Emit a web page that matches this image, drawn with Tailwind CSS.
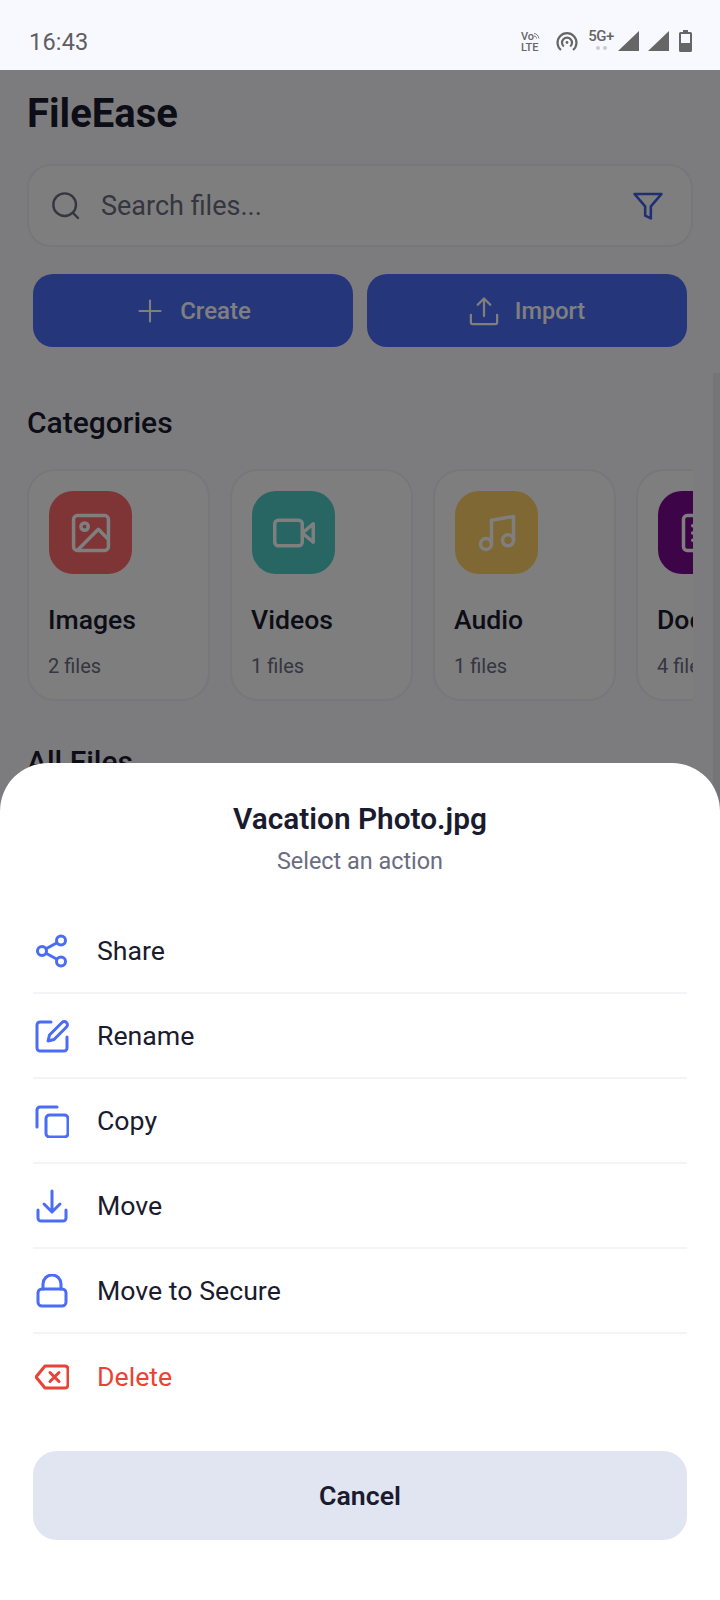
<!DOCTYPE html>
<html>
<head>
<meta charset="utf-8">
<script src="https://cdn.jsdelivr.net/npm/@tailwindcss/browser@4"></script>
</head>
<body class="m-0">
<div class="relative w-[720px] h-[1600px] overflow-hidden bg-[#f8f9ff] font-['Roboto',sans-serif] text-[#1a1b2e]">
  <!-- status bar -->
  <div class="h-[70px] flex items-center justify-between pl-[29px] pr-[28px] pt-[14px] text-[#5f5f62]">
    <span class="text-[23.500px] leading-none tracking-[0.2px] pt-[2px]">16:43</span>
    <div class="flex items-center">
      <div class="w-[19px] mr-[16px] text-[11px] leading-[11px] font-medium flex flex-col text-[#666]">
        <span class="flex items-center">Vo<svg width="7" height="9" viewBox="0 0 7 9" fill="none" stroke="#666" stroke-width="1"><path d="M0 1c3 0 5 2 6 6M0 4c2 0 3 1 3 3"/></svg></span>
        <span>LTE</span>
      </div>
      <svg class="mr-[10px]" width="22" height="22" viewBox="0 0 22 22" fill="none" stroke="#666" stroke-width="2.200"><path d="M5 19a9.500 9.500 0 1 1 12 0"/><path d="M7.800 15.500a5 5 0 1 1 6.400 0"/><circle cx="11" cy="11.500" r="1.400" fill="#666" stroke="none"/></svg>
      <div class="w-[28px] mr-[3px] flex flex-col items-center -mt-[6px] -ml-[1px]">
        <span class="text-[15px] leading-[16px] font-medium tracking-[-0.5px] text-[#666]">5G+</span>
        <span class="flex gap-[3px] mt-[2px]"><i class="block w-[4px] h-[4px] rounded-full bg-[#ccc]"></i><i class="block w-[4px] h-[4px] rounded-full bg-[#ccc]"></i></span>
      </div>
      <svg class="mr-[8px] -mt-[2px]" width="22" height="22" viewBox="0 0 22 22"><path d="M21 1v20H0z" fill="#666"/></svg>
      <svg class="mr-[9px] -mt-[2px]" width="22" height="22" viewBox="0 0 22 22"><path d="M21 1v20H0z" fill="#666"/></svg>
      <svg class="-mt-[2px]" width="13" height="22" viewBox="0 0 13 22"><path fill-rule="evenodd" d="M4 0h5v2h2.500A1.500 1.500 0 0 1 13 3.500V20.500A1.500 1.500 0 0 1 11.500 22h-10A1.500 1.500 0 0 1 0 20.500V3.500A1.500 1.500 0 0 1 1.500 2H4zM2 4v9h9V4z" fill="#666"/></svg>
    </div>
  </div>

  <!-- page -->
  <div class="px-[27px]">
    <h1 class="mt-[23px] text-[40px] leading-[42px] font-bold text-[#1a1b2e]">FileEase</h1>
    <div class="mt-[29px] h-[83px] rounded-[24px] border-2 border-[#eceef5] bg-[#fcfcff] flex items-center pl-[21px] pr-[26px]">
      <svg width="32" height="32" viewBox="0 0 24 24" fill="none" stroke="#6b6c80" stroke-width="1.800" stroke-linecap="round"><circle cx="11" cy="11" r="8.500"/><path d="m21 21-3.800-3.800"/></svg>
      <span class="ml-[19px] pt-[2px] text-[27px] leading-none text-[#6b6c80] flex-1">Search files...</span>
      <svg width="34" height="34" viewBox="0 0 24 24" fill="none" stroke="#3f5fe0" stroke-width="1.800" stroke-linejoin="round"><path d="M2.500 3.500h19l-7.500 8.800v8.500l-4-2v-6.500z"/></svg>
    </div>
    <div class="mt-[27px] mx-[6px] grid grid-cols-2 gap-[14px]">
      <div class="h-[73px] rounded-[20px] bg-[#4a6cf7] flex items-center justify-center gap-[18px] pl-[3px] text-white">
        <svg width="24" height="24" viewBox="0 0 24 24" fill="none" stroke="#fff" stroke-width="2.100" stroke-linecap="round"><path d="M12 1.500v21M1.500 12h21"/></svg>
        <span class="text-[24px] font-medium leading-none pt-[1px]">Create</span>
      </div>
      <div class="h-[73px] rounded-[20px] bg-[#4a6cf7] flex items-center justify-center gap-[16px] text-white">
        <svg width="30" height="30" viewBox="0 0 24 24" fill="none" stroke="#fff" stroke-width="1.800" stroke-linecap="round" stroke-linejoin="round"><path d="M12 16V2M7 7l5-5 5 5M1.500 15v6a1.500 1.500 0 0 0 1.500 1.500h18a1.500 1.500 0 0 0 1.500-1.500v-6"/></svg>
        <span class="text-[23.500px] font-medium leading-none pt-[3px]">Import</span>
      </div>
    </div>
    <h2 class="mt-[60px] text-[30px] leading-[32px] font-medium">Categories</h2>
    <div class="mt-[30px] w-[666px] overflow-hidden">
      <div class="flex gap-[20px] w-[900px]">
        <div class="w-[183px] h-[232px] shrink-0 rounded-[28px] border-2 border-[#eceef5] bg-[#fcfcff] pl-[20px] pt-[20px]">
          <div class="w-[83px] h-[83px] rounded-[24px] bg-[#ff6b6b] flex items-center justify-center">
            <svg width="44" height="44" viewBox="0 0 24 24" fill="none" stroke="#fff" stroke-width="1.900" stroke-linecap="round" stroke-linejoin="round"><rect x="2.500" y="2.500" width="19" height="19" rx="2"/><circle cx="8.500" cy="8.500" r="2"/><path d="M21 15l-5-5L5 21"/></svg>
          </div>
          <div class="mt-[30px] -ml-[1px] text-[26.600px] leading-[32px] font-medium">Images</div>
          <div class="mt-[18px] -ml-[1px] text-[20px] leading-[24px] text-[#6b6c80]">2 files</div>
        </div>
        <div class="w-[183px] h-[232px] shrink-0 rounded-[28px] border-2 border-[#eceef5] bg-[#fcfcff] pl-[20px] pt-[20px]">
          <div class="w-[83px] h-[83px] rounded-[24px] bg-[#4ecdc4] flex items-center justify-center">
            <svg width="44" height="44" viewBox="0 0 24 24" fill="none" stroke="#fff" stroke-width="1.900" stroke-linecap="round" stroke-linejoin="round"><rect x="1.500" y="5" width="15" height="14" rx="2"/><path d="M22.500 7l-6 5 6 5z"/></svg>
          </div>
          <div class="mt-[30px] -ml-[1px] text-[26.600px] leading-[32px] font-medium">Videos</div>
          <div class="mt-[18px] -ml-[1px] text-[20px] leading-[24px] text-[#6b6c80]">1 files</div>
        </div>
        <div class="w-[183px] h-[232px] shrink-0 rounded-[28px] border-2 border-[#eceef5] bg-[#fcfcff] pl-[20px] pt-[20px]">
          <div class="w-[83px] h-[83px] rounded-[24px] bg-[#ffd166] flex items-center justify-center">
            <svg width="44" height="44" viewBox="0 0 24 24" fill="none" stroke="#fff" stroke-width="1.900" stroke-linecap="round" stroke-linejoin="round"><path d="M9 18V5l12-2v13"/><circle cx="6" cy="18" r="3"/><circle cx="18" cy="16" r="3"/></svg>
          </div>
          <div class="mt-[30px] -ml-[1px] text-[26.600px] leading-[32px] font-medium">Audio</div>
          <div class="mt-[18px] -ml-[1px] text-[20px] leading-[24px] text-[#6b6c80]">1 files</div>
        </div>
        <div class="w-[183px] h-[232px] shrink-0 rounded-[28px] border-2 border-[#eceef5] bg-[#fcfcff] pl-[20px] pt-[20px]">
          <div class="w-[83px] h-[83px] rounded-[24px] bg-[#7b0a8f] flex items-center justify-center">
            <svg width="44" height="44" viewBox="0 0 24 24" fill="none" stroke="#fff" stroke-width="1.900" stroke-linecap="round" stroke-linejoin="round"><rect x="3" y="2.500" width="18" height="19" rx="2"/><path d="M8 8h8M8 12h8M8 16h8"/></svg>
          </div>
          <div class="mt-[30px] -ml-[1px] text-[26.600px] leading-[32px] font-medium">Docs</div>
          <div class="mt-[18px] -ml-[1px] text-[20px] leading-[24px] text-[#6b6c80]">4 files</div>
        </div>
      </div>
    </div>
    <h2 class="mt-[45px] text-[30px] leading-[32px] font-medium">All Files</h2>
  </div>

  <!-- scrim and sheet -->
  <div class="absolute left-0 right-0 top-[70px] bottom-0 bg-black/50"></div>
  <div class="absolute right-0 top-[373px] w-[7px] h-[460px] bg-[#757578]"></div>

  <div class="absolute left-0 right-0 top-[763px] bottom-0 rounded-t-[48px] bg-white px-[33px]">
    <div class="mt-[38px] text-center text-[29.800px] leading-[36px] font-semibold text-[#1a1b2e]">Vacation Photo.jpg</div>
    <div class="mt-[10px] text-center text-[23.400px] leading-[28px] text-[#6b6c80]">Select an action</div>

    <div class="mt-[34px]">
      <div class="h-[85px] flex items-center border-b-2 border-[#f3f4f8] pl-[2px] gap-[28px]">
        <svg width="34" height="34" viewBox="0 0 34 34" fill="none" stroke="#4a6cf7" stroke-width="3"><circle cx="26" cy="6.500" r="4.500"/><circle cx="7" cy="17" r="4.500"/><circle cx="26" cy="27.500" r="4.500"/><path d="M11 14.800l11-6M11 19.200l11 6"/></svg>
        <span class="text-[26.700px] leading-none pt-[2px]">Share</span>
      </div>
      <div class="h-[85px] flex items-center border-b-2 border-[#f3f4f8] pl-[2px] gap-[28px]">
        <svg width="34" height="34" viewBox="0 0 34 34" fill="none" stroke="#4a6cf7" stroke-width="3" stroke-linecap="round" stroke-linejoin="round"><path d="M16 3H5a3 3 0 0 0-3 3v23a3 3 0 0 0 3 3h24a3 3 0 0 0 3-3V18"/><path d="M13 22l1.500-6L27 3.500a3 3 0 0 1 4.500 4.500L19 20.500z"/></svg>
        <span class="text-[26.700px] leading-none pt-[2px]">Rename</span>
      </div>
      <div class="h-[85px] flex items-center border-b-2 border-[#f3f4f8] pl-[2px] gap-[28px]">
        <svg width="34" height="34" viewBox="0 0 34 34" fill="none" stroke="#4a6cf7" stroke-width="3" stroke-linecap="round" stroke-linejoin="round"><rect x="11" y="11" width="22" height="22" rx="3.500"/><path d="M22 3H5a3 3 0 0 0-3 3v17"/></svg>
        <span class="text-[26.700px] leading-none pt-[2px]">Copy</span>
      </div>
      <div class="h-[85px] flex items-center border-b-2 border-[#f3f4f8] pl-[2px] gap-[28px]">
        <svg width="34" height="34" viewBox="0 0 34 34" fill="none" stroke="#4a6cf7" stroke-width="3" stroke-linecap="round" stroke-linejoin="round"><path d="M17 2v21M9 15l8 8 8-8M3 21v8a3 3 0 0 0 3 3h22a3 3 0 0 0 3-3v-8"/></svg>
        <span class="text-[26.700px] leading-none pt-[2px]">Move</span>
      </div>
      <div class="h-[85px] flex items-center border-b-2 border-[#f3f4f8] pl-[2px] gap-[28px]">
        <svg width="34" height="34" viewBox="0 0 34 34" fill="none" stroke="#4a6cf7" stroke-width="3" stroke-linecap="round" stroke-linejoin="round"><rect x="3" y="15" width="28" height="17" rx="4"/><path d="M8 15V10a9 9 0 0 1 18 0v5"/></svg>
        <span class="text-[26.700px] leading-none pt-[2px]">Move to Secure</span>
      </div>
      <div class="h-[85px] flex items-center pl-[2px] gap-[28px]">
        <svg width="34" height="34" viewBox="0 0 34 34" fill="none" stroke="#ea4335" stroke-width="3" stroke-linecap="round" stroke-linejoin="round"><path d="M10 6h20a3 3 0 0 1 3 3v16a3 3 0 0 1-3 3H10L1 17z"/><path d="M15 12.500l9 9M24 12.500l-9 9"/></svg>
        <span class="text-[26.700px] leading-none pt-[2px] text-[#ea4335]">Delete</span>
      </div>
    </div>

    <div class="mt-[32px] h-[89px] rounded-[24px] bg-[#e1e4f1] flex items-center justify-center pt-[2px] text-[26.700px] font-semibold">Cancel</div>
  </div>
</div>
</body>
</html>
